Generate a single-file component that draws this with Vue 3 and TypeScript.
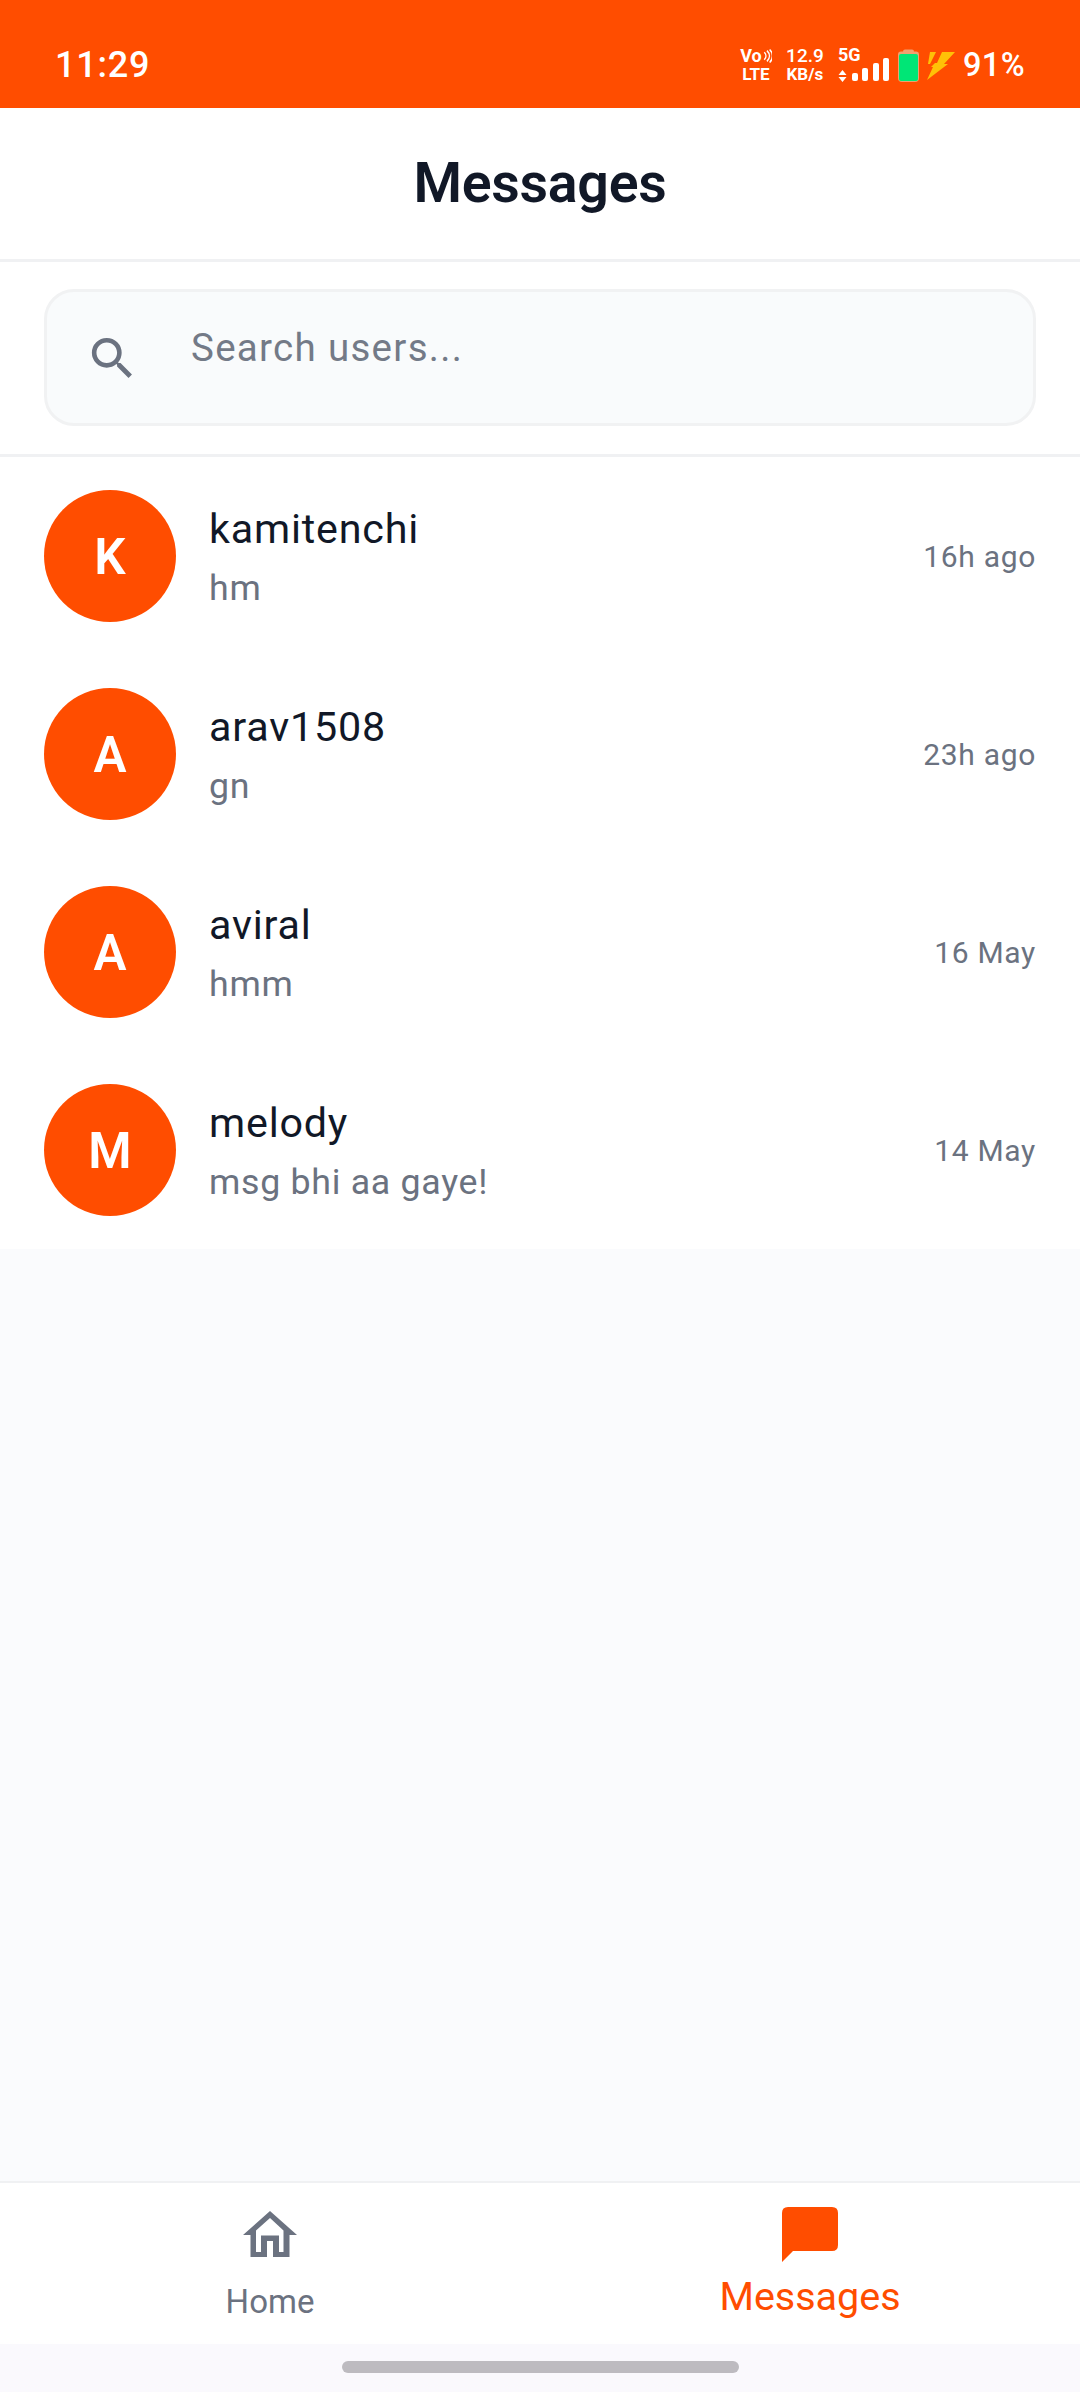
<script setup lang="ts">
const chats = [
  { initial: "K", name: "kamitenchi", last: "hm", time: "16h ago" },
  { initial: "A", name: "arav1508", last: "gn", time: "23h ago" },
  { initial: "A", name: "aviral", last: "hmm", time: "16 May" },
  { initial: "M", name: "melody", last: "msg bhi aa gaye!", time: "14 May" },
];
</script>

<template>
  <div class="screen">
    <div class="status">
      <span class="clock">11:29</span>
      <div class="status-right">
        <div class="stack volte">
          <span class="vo">Vo<svg width="9" height="14" viewBox="0 0 8 13" fill="none" stroke="#fff" stroke-width="1.4"><path d="M1 3c2 2 2 5 0 7M3.500 1.500c3 3 3 7 0 10M6 .5c3.500 3.500 3.500 8.500 0 12" /></svg></span>
          <span>LTE</span>
        </div>
        <div class="stack speed">
          <span class="speed-num">12.9</span>
          <span>KB/s</span>
        </div>
        <div class="net">
          <span class="five-g">5G</span>
          <svg class="bars" width="51" height="24" viewBox="0 0 51 24" fill="#fff">
            <path d="M4.500 12 8.500 17H.5zM4.500 24 .5 19H8.500z" />
            <rect x="14" y="15" width="6" height="8" rx="2" />
            <rect x="24" y="10" width="6" height="13" rx="2" />
            <rect x="35" y="5" width="6" height="18" rx="2" />
            <rect x="45" y="0" width="6" height="23" rx="2" />
          </svg>
        </div>
        <svg class="battery" width="21" height="33" viewBox="0 0 21 33">
          <path d="M5 2.500Q5 .5 7 .5h7q2 0 2 2h2q3 0 3 3V29q0 4-4 4H4q-4 0-4-4V5.500q0-3 3-3z" fill="#f0a070" />
          <rect x="1" y="5" width="19" height="27" rx="2" fill="#00e676" />
        </svg>
        <svg class="bolt" width="28" height="30" viewBox="0 0 28 30" fill="#ffc107">
          <path d="M3 2H9L3 14H1z" />
          <path d="M15 2H28L17 14H21L0 30 6 17H4L8 13H10z" />
        </svg>
        <span class="battery-text">91%</span>
      </div>
    </div>

    <header class="title-bar">
      <h1>Messages</h1>
    </header>

    <div class="search-wrap">
      <div class="search">
        <svg class="search-icon" width="55" height="55" viewBox="0 0 24 24" fill="#6b7280">
          <path d="M15.500 14h-.79l-.28-.27A6.470 6.470 0 0 0 16 9.500 6.500 6.500 0 1 0 9.500 16c1.610 0 3.090-.59 4.230-1.570l.27.28v.79l5 4.990L20.490 19l-4.990-5zm-6 0C7.010 14 5 11.990 5 9.500S7.010 5 9.500 5 14 7.010 14 9.500 11.990 14 9.500 14z" />
        </svg>
        <span class="placeholder">Search users...</span>
      </div>
    </div>

    <ul class="list">
      <li v-for="chat in chats" :key="chat.name" class="row">
        <div class="avatar">{{ chat.initial }}</div>
        <div class="info">
          <div class="name">{{ chat.name }}</div>
          <div class="last">{{ chat.last }}</div>
        </div>
        <div class="time">{{ chat.time }}</div>
      </li>
    </ul>

    <div class="spacer"></div>

    <nav class="tabs">
      <div class="tab">
        <svg class="home-icon" width="54" height="46" viewBox="0 0 54 46" fill="#6b7280" fill-rule="evenodd">
          <path d="M27 0 54 24H46.500V46H30V30H24V46H7.500V24H0ZM27 7 13 19.500V41H18V24.500H36V41H40.500V19.500Z" />
        </svg>
        <span class="tab-label">Home</span>
      </div>
      <div class="tab active">
        <svg class="chat-icon" width="56" height="55" viewBox="0 0 56 55" fill="#ff4d00">
          <path d="M6 0H50Q56 0 56 6V38Q56 44 50 44H11L0 55V6Q0 0 6 0Z" />
        </svg>
        <span class="tab-label">Messages</span>
      </div>
    </nav>

    <div class="gesture">
      <div class="pill"></div>
    </div>
  </div>
</template>

<style>
html,
body {
  margin: 0;
  padding: 0;
  background: #fafbfd;
}
</style>

<style scoped>
.screen {
  width: 1080px;
  height: 2392px;
  display: flex;
  flex-direction: column;
  background: #fafbfd;
  font-family: Roboto, "Noto Sans", sans-serif;
  overflow: hidden;
}

.status {
  height: 108px;
  flex: none;
  box-sizing: border-box;
  padding: 45px 55px 0 55px;
  background: #ff4d00;
  color: #fff;
  display: flex;
  justify-content: space-between;
  align-items: flex-start;
}

.clock {
  font-size: 36px;
  line-height: 40px;
  font-weight: 500;
  letter-spacing: 0.8px;
}

.status-right {
  display: flex;
  align-items: center;
  height: 36px;
  margin-top: 2px;
}

.stack {
  display: flex;
  flex-direction: column;
  align-items: center;
  font-size: 17px;
  line-height: 18px;
  font-weight: 700;
}

.volte {
  width: 30px;
}

.vo {
  display: flex;
  align-items: center;
  font-size: 18px;
  gap: 1px;
}

.speed {
  width: 38px;
  margin-left: 15px;
}

.speed-num {
  font-size: 19px;
  font-weight: 500;
}

.net {
  width: 51px;
  margin-left: 14px;
  position: relative;
  height: 34px;
}

.five-g {
  position: absolute;
  left: 0;
  top: -1px;
  font-size: 18px;
  line-height: 16px;
  font-weight: 700;
}

.bars {
  position: absolute;
  left: 0;
  bottom: 0;
}

.battery {
  margin-left: 9px;
}

.bolt {
  margin-left: 8px;
}

.battery-text {
  margin-left: 8px;
  font-size: 32.500px;
  font-weight: 500;
  letter-spacing: 0.4px;
  line-height: 36px;
}

.title-bar {
  height: 154px;
  flex: none;
  box-sizing: border-box;
  background: #fff;
  border-bottom: 3px solid #f0f1f3;
  display: flex;
  align-items: center;
  justify-content: center;
}

h1 {
  margin: 0;
  font-size: 55.500px;
  font-weight: 600;
  color: #111827;
  letter-spacing: -0.3px;
}

.search-wrap {
  flex: none;
  box-sizing: border-box;
  height: 195px;
  padding: 27px 44px 0;
  background: #fff;
  border-bottom: 3px solid #f0f1f3;
}

.search {
  height: 137px;
  box-sizing: border-box;
  background: #f9fbfc;
  border: 3px solid #f1f2f3;
  border-radius: 30px;
  display: flex;
  align-items: flex-start;
  padding: 0 0 0 38px;
}

.search-icon {
  margin-top: 39px;
  flex: none;
}

.placeholder {
  margin: 34px 0 0 51px;
  font-size: 38.500px;
  line-height: 44px;
  color: #737a87;
  letter-spacing: 1.3px;
}

.list {
  list-style: none;
  margin: 0;
  padding: 0;
  flex: none;
  background: #fff;
}

.row {
  height: 198px;
  box-sizing: border-box;
  padding: 33px 44px;
  display: flex;
  align-items: center;
}

.avatar {
  width: 132px;
  height: 132px;
  flex: none;
  border-radius: 50%;
  background: #ff4d00;
  color: #fff;
  font-size: 49.500px;
  font-weight: 600;
  display: flex;
  align-items: center;
  justify-content: center;
  padding-top: 1px;
  box-sizing: border-box;
}

.info {
  flex: 1;
  margin-left: 33px;
  padding-top: 3px;
}

.name {
  font-size: 41.250px;
  line-height: 46px;
  color: #111827;
  letter-spacing: 0.8px;
  margin-top: -2px;
}

.last {
  margin-top: 16px;
  font-size: 35.750px;
  line-height: 40px;
  color: #6b7280;
  letter-spacing: 0.7px;
}

.time {
  font-size: 30px;
  line-height: 36px;
  color: #6b7280;
  letter-spacing: 0.7px;
  padding-top: 2px;
}

.spacer {
  flex: 1;
}

.tabs {
  height: 163px;
  flex: none;
  box-sizing: border-box;
  background: #fff;
  border-top: 2px solid #f0f1f3;
  display: flex;
}

.tab {
  flex: 1;
  display: flex;
  flex-direction: column;
  align-items: center;
  position: relative;
}

.home-icon {
  margin-top: 28px;
}

.chat-icon {
  margin-top: 24px;
}

.tab-label {
  font-size: 33px;
  line-height: 40px;
  color: #6b7280;
  margin-top: 25px;
}

.active .tab-label {
  color: #ff4d00;
  font-size: 39.500px;
  margin-top: 15px;
}

.gesture {
  height: 48px;
  flex: none;
  background: #faf9fd;
  display: flex;
  justify-content: center;
  padding-top: 17px;
  box-sizing: border-box;
}

.pill {
  width: 397px;
  height: 12px;
  border-radius: 6px;
  background: #bdbbc0;
}
</style>
